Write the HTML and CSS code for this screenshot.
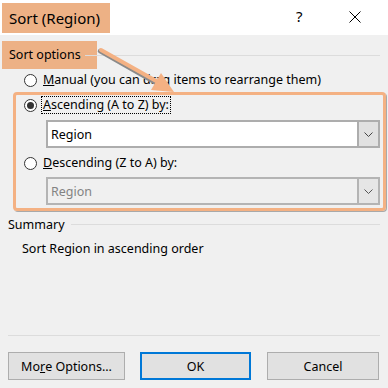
FILE: index.html
```html
<!DOCTYPE html>
<html>
<head>
<meta charset="utf-8">
<link rel="stylesheet" href="styles.css">
</head>
<body>
<div class="dialog">
  <div class="titlebar">
    <div class="title">Sort (Region)</div>
    <div class="help">?</div>
    <div class="close">
      <svg width="12" height="12" viewBox="0 0 12 12"><path d="M0.5 0.5 L11.5 11.5 M11.5 0.5 L0.5 11.5" stroke="#000" stroke-width="1" fill="none"/></svg>
    </div>
  </div>
  <div class="group-head">
    <div class="group-label">Sort options</div>
    <div class="group-line"></div>
  </div>
  <div class="radio-row manual">
    <span class="radio"></span>
    <span class="label"><u>M</u>anual (you can drag items to rearrange them)</span>
  </div>
  <div class="highlight">
    <div class="radio-row">
      <span class="radio checked"></span>
      <span class="label focus"><u>A</u>scending (A to Z) by:</span>
    </div>
    <div class="combo">
      <span class="combo-text">Region</span>
      <span class="combo-btn"><svg width="9" height="5" viewBox="0 0 9 5"><polyline points="0.5,0.5 4.5,4.5 8.5,0.5" stroke="#444" stroke-width="1" fill="none"/></svg></span>
    </div>
    <div class="radio-row desc">
      <span class="radio"></span>
      <span class="label"><u>D</u>escending (Z to A) by:</span>
    </div>
    <div class="combo disabled">
      <span class="combo-text">Region</span>
      <span class="combo-btn"><svg width="9" height="5" viewBox="0 0 9 5"><polyline points="0.5,0.5 4.5,4.5 8.5,0.5" stroke="#555" stroke-width="1" fill="none"/></svg></span>
    </div>
  </div>
  <div class="summary-head">
    <span>Summary</span>
    <div class="summary-line"></div>
  </div>
  <div class="summary-text">Sort Region in ascending order</div>
  <div class="separator"></div>
  <div class="buttons">
    <div class="btn more">Mo<u>r</u>e Options...</div>
    <div class="btn ok">OK</div>
    <div class="btn cancel">Cancel</div>
  </div>
  <svg class="arrow" width="388" height="120" viewBox="0 0 388 120">
    <line x1="100" y1="51" x2="158" y2="84" stroke="#8a8a8a" stroke-width="4.5" stroke-linecap="round"/>
    <line x1="101" y1="50" x2="158" y2="82" stroke="#F4B183" stroke-width="4" stroke-linecap="round"/>
    <polygon points="174,92 151,90 161,73" fill="#F4B183"/>
  </svg>
</div>
</body>
</html>
```
FILE: styles.css
```css
html, body {
  margin: 0;
  padding: 0;
}
body {
  width: 388px;
  height: 388px;
  overflow: hidden;
  background: #F0F0F0;
  font-family: "Noto Sans", "Open Sans", sans-serif;
  font-size: 12.5px;
  color: #000;
}
.dialog {
  position: relative;
  width: 388px;
  height: 388px;
}
.titlebar {
  height: 35px;
  background: #fff;
  display: flex;
  align-items: flex-start;
}
.title {
  margin-top: 3px;
  margin-left: 2px;
  width: 101px;
  height: 30px;
  padding-left: 7px;
  background: #EDB185;
  font-size: 15px;
  line-height: 30px;
}
.help {
  margin-left: 186px;
  margin-top: 6px;
  font-size: 15px;
  line-height: 20px;
  width: 12px;
}
.close {
  margin-left: 41px;
  margin-top: 11px;
  width: 12px;
  height: 12px;
}
.close svg { display: block; }
.group-head {
  margin-top: 6px;
  height: 28px;
  display: flex;
  align-items: center;
}
.group-label {
  margin-left: 2px;
  width: 88px;
  height: 28px;
  padding-left: 7px;
  background: #EDB185;
  line-height: 27px;
}
.group-line {
  flex: 1;
  height: 1px;
  margin-left: -12px;
  margin-right: 8px;
  background: #DCDCDC;
}
.radio-row {
  height: 20px;
  display: flex;
  align-items: center;
}
.manual {
  margin-top: 1px;
  padding-left: 24px;
}
.radio {
  box-sizing: border-box;
  width: 13px;
  height: 13px;
  border: 1px solid #333;
  border-radius: 50%;
  background: #fff;
  display: flex;
  align-items: center;
  justify-content: center;
  flex: none;
}
.radio.checked::after {
  content: "";
  width: 7px;
  height: 7px;
  border-radius: 50%;
  background: #333;
}
.label {
  margin-left: 6px;
  white-space: nowrap;
  line-height: 16px;
}
.label.focus {
  margin-left: 4px;
  padding: 0 1px;
  border: 1px dotted #000;
}
.highlight {
  box-sizing: border-box;
  margin-top: 2px;
  margin-left: 13px;
  width: 373px;
  border: 3px solid #F4B183;
  border-radius: 4px;
  padding: 0 0 3px 8px;
  box-shadow: 1px 1px 0 #A9A9A9;
}
.combo {
  box-sizing: border-box;
  margin-top: 5px;
  margin-left: 22px;
  margin-right: 3px;
  height: 28px;
  border: 2px solid #ADADAD;
  background: #fff;
  display: flex;
  align-items: center;
}
.combo-text {
  flex: 1;
  padding-left: 3px;
}
.combo-btn {
  box-sizing: border-box;
  width: 21px;
  height: 24px;
  border-left: 2px solid #ADADAD;
  background: #E1E1E1;
  display: flex;
  align-items: center;
  justify-content: center;
}
.combo-btn svg { display: block; }
.desc {
  margin-top: 5px;
}
.combo.disabled {
  margin-top: 4px;
  background: #F0F0F0;
  border-color: #B4B4B4;
}
.combo.disabled .combo-text { color: #838383; }
.combo.disabled .combo-btn {
  background: #E6E6E6;
  border-left-color: #B4B4B4;
}
.summary-head {
  margin-top: 3px;
  height: 20px;
  display: flex;
  align-items: center;
  padding-left: 8px;
}
.summary-line {
  flex: 1;
  height: 1px;
  margin-left: 6px;
  margin-right: 8px;
  background: #DCDCDC;
}
.summary-text {
  margin-top: 5px;
  height: 20px;
  line-height: 20px;
  padding-left: 22px;
}
.separator {
  margin: 76px 8px 0 8px;
  height: 1px;
  background: #DCDCDC;
}
.buttons {
  margin-top: 16px;
  margin-left: 8px;
  display: flex;
}
.btn {
  box-sizing: border-box;
  height: 28px;
  background: #E1E1E1;
  border: 1px solid #ADADAD;
  display: flex;
  align-items: center;
  justify-content: center;
}
.more { width: 117px; }
.ok {
  width: 111px;
  margin-left: 15px;
  border: 2px solid #0078D7;
}
.cancel {
  width: 112px;
  margin-left: 16px;
}
.arrow {
  position: absolute;
  left: 0;
  top: 0;
}
```
